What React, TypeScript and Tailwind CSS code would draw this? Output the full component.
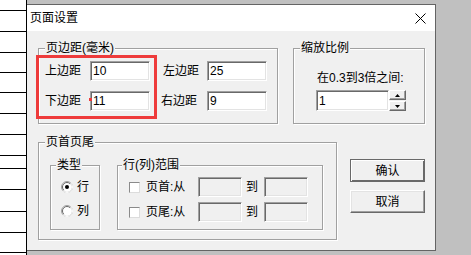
import type { ReactNode } from "react";

const rows = [
  "h-[11px]", "h-[21px]", "h-[21px]", "h-[20px]", "h-[20px]", "h-[21px]", "h-[21px]",
  "h-[21px]", "h-[13px]", "h-[21px]", "h-[22px]", "h-[21px]", "h-[20px]",
];

const sunken =
  "border border-t-[#a0a0a0] border-l-[#a0a0a0] border-r-white border-b-white shadow-[inset_1px_1px_0_#696969,inset_-1px_-1px_0_#e3e3e3] outline-none px-[2px] text-[12px] leading-[12px]";

function Group({ title, className, legend = "ml-[6px]", children }: { title: string; className: string; legend?: string; children?: ReactNode }) {
  return (
    <div className={`border border-[#a0a0a0] shadow-[inset_1px_1px_0_#fff,1px_1px_0_#fff] ${className}`}>
      <span className={`block w-fit -mt-[7px] px-[1px] h-[12px] bg-[#f0f0f0] leading-[12px] ${legend}`}>{title}</span>
      {children}
    </div>
  );
}

function Radio({ checked }: { checked?: boolean }) {
  return (
    <svg width="12" height="12" viewBox="0 0 12 12" className="shrink-0">
      <circle cx="6" cy="6" r="5.5" fill="#fff" stroke="#a0a0a0" />
      <path d="M9.9 2.1 A5.5 5.5 0 0 1 2.1 9.9" fill="none" stroke="#fff" />
      <path d="M2.8 9.2 A4.5 4.5 0 0 1 9.2 2.8" fill="none" stroke="#696969" />
      {checked && <circle cx="6" cy="6" r="2" fill="#000" />}
    </svg>
  );
}

function Check() {
  return <div className="w-[11px] h-[11px] shrink-0 bg-white border border-t-[#8a8a8a] border-l-[#8a8a8a] border-r-[#dcdcdc] border-b-[#dcdcdc]" />;
}

function Spin({ up }: { up?: boolean }) {
  return (
    <div className="h-[10px] w-[17px] flex items-center justify-center bg-[#f0f0f0] border border-t-white border-l-white border-r-[#696969] border-b-[#696969] shadow-[inset_-1px_-1px_0_#a0a0a0]">
      <svg width="5" height="3" viewBox="0 0 5 3">
        {up ? <polygon points="2.5,0 5,3 0,3" fill="#000" /> : <polygon points="0,0 5,0 2.5,3" fill="#000" />}
      </svg>
    </div>
  );
}

function MarginRow({ a, av, b, bv, bpad }: { a: string; av: string; b: string; bv: string; bpad: string }) {
  return (
    <div className="flex items-center h-[20px] pl-[6px]">
      <span className="w-[45px]">{a}</span>
      <input readOnly defaultValue={av} className={`${sunken} w-[60px] h-[20px] bg-white`} />
      <span className={`w-[57px] ${bpad}`}>{b}</span>
      <input readOnly defaultValue={bv} className={`${sunken} w-[60px] h-[20px] bg-white`} />
    </div>
  );
}

function RangeRow({ label }: { label: string }) {
  return (
    <div className="flex items-center h-[20px]">
      <Check />
      <span className="ml-[6px] w-[52px]">{label}</span>
      <input readOnly disabled className={`${sunken} w-[44px] h-[20px] bg-[#f0f0f0]`} />
      <span className="w-[22px] pl-[4px]">到</span>
      <input readOnly disabled className={`${sunken} w-[44px] h-[20px] bg-[#f0f0f0]`} />
    </div>
  );
}

export default function App() {
  return (
    <div className="flex w-[471px] h-[255px] overflow-hidden bg-[#c0c0c0] text-black text-[12px] leading-[12px] font-[family-name:Liberation_Sans,Noto_Sans_CJK_SC,sans-serif]">
      <div className="w-[27px] h-full shrink-0 bg-white border-r border-black flex flex-col">
        {rows.map((h, i) => (
          <div key={i} className={`${h} shrink-0 border-b border-black`} />
        ))}
      </div>

      <div className="mt-[4px] w-[409px] h-[247px] shrink-0 flex flex-col border-t border-r border-b border-[#646464]">
        <div className="h-[26px] shrink-0 bg-white flex items-center justify-between pl-[3px] pr-[9px]">
          <span>页面设置</span>
          <svg width="11" height="11" viewBox="0 0 11 11" className="mt-[1px]">
            <path d="M0.5 0.5 L10.5 10.5 M10.5 0.5 L0.5 10.5" stroke="#000" strokeWidth="1" />
          </svg>
        </div>

        <div className="flex-1 bg-[#f0f0f0] pt-[17px] pl-[11px]">
          <div className="flex gap-[15px]">
            <Group title="页边距(毫米)" className="relative w-[240px] h-[76px]">
              <div className="mt-[7px] flex flex-col gap-[10px]">
                <MarginRow a="上边距" av="10" b="左边距" bv="25" bpad="pl-[13px]" />
                <MarginRow a="下边距" av="11" b="右边距" bv="9" bpad="pl-[11px]" />
              </div>
              <div className="absolute left-[-3px] top-[6px] w-[121px] h-[64px] border-[3px] border-[#ee3b3b]" />
              <div className="absolute left-[50px] top-[49px] w-[3px] h-[3px] bg-[#ee3b3b]" />
            </Group>

            <Group title="缩放比例" className="w-[132px] h-[76px]">
              <div className="mt-[18px] pl-[23px]">在0.3到3倍之间:</div>
              <div className="mt-[6px] ml-[22px] flex">
                <input readOnly defaultValue="1" className={`${sunken} w-[73px] h-[21px] bg-white`} />
                <div className="flex flex-col h-[21px] justify-between">
                  <Spin up />
                  <Spin />
                </div>
              </div>
            </Group>
          </div>

          <div className="flex mt-[18px] gap-[13px]">
            <Group title="页首页尾" className="w-[299px] h-[98px]">
              <div className="mt-[17px] pl-[11px] flex gap-[17px]">
                <Group title="类型" legend="ml-[5px]" className="w-[50px] h-[65px]">
                  <div className="mt-[10px] pl-[10px] flex flex-col gap-[12px]">
                    <div className="flex items-center h-[12px] gap-[4px]">
                      <Radio checked />
                      <span>行</span>
                    </div>
                    <div className="flex items-center h-[12px] gap-[4px]">
                      <Radio />
                      <span>列</span>
                    </div>
                  </div>
                </Group>
                <Group title="行(列)范围" legend="ml-[4px]" className="w-[206px] h-[65px]">
                  <div className="mt-[6px] pl-[11px] flex flex-col gap-[5px]">
                    <RangeRow label="页首:从" />
                    <RangeRow label="页尾:从" />
                  </div>
                </Group>
              </div>
            </Group>

            <div className="mt-[17px] flex flex-col gap-[8px]">
              <button className="w-[75px] h-[23px] bg-[#f0f0f0] border border-[#696969] shadow-[inset_1px_1px_0_#fff,inset_-1px_-1px_0_#696969] text-[12px] leading-[12px]">
                确认
              </button>
              <button className="w-[75px] h-[23px] bg-[#f0f0f0] border border-t-white border-l-white border-r-[#696969] border-b-[#696969] shadow-[inset_-1px_-1px_0_#a0a0a0,inset_1px_1px_0_#e3e3e3] text-[12px] leading-[12px]">
                取消
              </button>
            </div>
          </div>
        </div>
      </div>
    </div>
  );
}
